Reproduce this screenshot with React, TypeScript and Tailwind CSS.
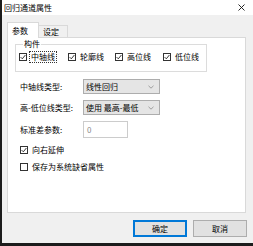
import React from "react";

const font = { fontFamily: '"Noto Sans CJK SC", "Noto Sans", sans-serif' };

function Check({ checked, label, focus }: { checked?: boolean; label: string; focus?: boolean }) {
  return (
    <div className="flex items-center gap-[2px] h-[14px]">
      <span className="w-[8px] h-[8px] border border-[#333] bg-white flex items-center justify-center shrink-0">
        {checked && (
          <svg width="6" height="6" viewBox="0 0 6 6">
            <path d="M0.6 3.1 L2.3 4.8 L5.4 1" fill="none" stroke="#222" strokeWidth="0.9" />
          </svg>
        )}
      </span>
      <span
        className={
          focus
            ? "border border-dotted border-[#333] px-px leading-[10px]"
            : "px-px leading-[10px] border border-transparent"
        }
      >
        {label}
      </span>
    </div>
  );
}

function Select({ value }: { value: string }) {
  return (
    <div className="w-[77px] h-[15px] bg-[#e5e5e5] border border-[#adadad] flex items-center justify-between pl-[2px] pr-[5px]">
      <span className="leading-none">{value}</span>
      <svg width="6" height="4" viewBox="0 0 6 4">
        <path d="M0.5 0.8 L3 3.2 L5.5 0.8" fill="none" stroke="#8a8a8a" strokeWidth="0.8" />
      </svg>
    </div>
  );
}

export default function App() {
  return (
    <div className="w-[253px] h-[246px] bg-[#1c1c1c] pl-[2px] text-[8px] text-black" style={font}>
      <div className="w-[251px] h-[243px] bg-[#f0f0f0] flex flex-col">
        {/* Title */}
        <div className="h-[15px] bg-white flex items-center justify-between pl-[2px] pr-[8px]">
          <span className="leading-none">回归通道属性</span>
          <svg width="7" height="7" viewBox="0 0 7 7">
            <path d="M0.5 0.5 L6.5 6.5 M6.5 0.5 L0.5 6.5" stroke="#111" strokeWidth="0.9" />
          </svg>
        </div>

        <div className="pl-[5px] pr-[7px] pt-[7px]">
          {/* Tabs */}
          <div className="flex items-end relative z-10">
            <div className="w-[32px] h-[16px] bg-white border border-b-0 border-[#d9d9d9] flex items-center pl-[4px]">
              <span className="leading-none">参数</span>
            </div>
            <div className="w-[29px] h-[13px] border border-l-0 border-b-0 border-[#d9d9d9] flex items-center pl-[4px]">
              <span className="leading-none">设定</span>
            </div>
          </div>

          {/* Panel */}
          <div className="h-[176px] -mt-px bg-white border border-[#d9d9d9] pl-[7px] pt-[1px]">
            <fieldset className="w-[192px] border border-[#dcdcdc] pl-[3px] pb-[6px]">
              <legend className="ml-[4px] px-px leading-[10px]">构件</legend>
              <div className="flex h-[16px] items-center">
                <div className="w-[49px]">
                  <Check checked focus label="中轴线" />
                </div>
                <div className="w-[47px]">
                  <Check checked label="轮廓线" />
                </div>
                <div className="w-[48px]">
                  <Check checked label="高位线" />
                </div>
                <Check checked label="低位线" />
              </div>
            </fieldset>

            <div className="pl-[5px] mt-[7px] flex flex-col gap-[6px]">
              <div className="flex items-center">
                <span className="w-[63px]">中轴线类型:</span>
                <Select value="线性回归" />
              </div>
              <div className="flex items-center">
                <span className="w-[63px]">高-低位线类型:</span>
                <Select value="使用 最高-最低" />
              </div>
              <div className="flex items-center">
                <span className="w-[63px]">标准差参数:</span>
                <div className="w-[45px] h-[17px] border border-[#cccccc] flex items-center pl-[3px] text-[#8a8a8a]">
                  0
                </div>
              </div>
            </div>

            <div className="pl-[5px] mt-[5px] flex flex-col gap-[3px]">
              <Check checked label="向右延伸" />
              <Check label="保存为系统缺省属性" />
            </div>
          </div>

          {/* Buttons */}
          <div className="flex justify-end gap-[6px] mt-[7px] -mr-px">
            <button className="w-[54px] h-[17px] bg-[#e1e1e1] border border-[#0078d7] shadow-[inset_0_0_0_1px_#0078d7] leading-none">
              确定
            </button>
            <button className="w-[54px] h-[17px] bg-[#e1e1e1] border border-[#adadad] leading-none">
              取消
            </button>
          </div>
        </div>
      </div>
    </div>
  );
}
